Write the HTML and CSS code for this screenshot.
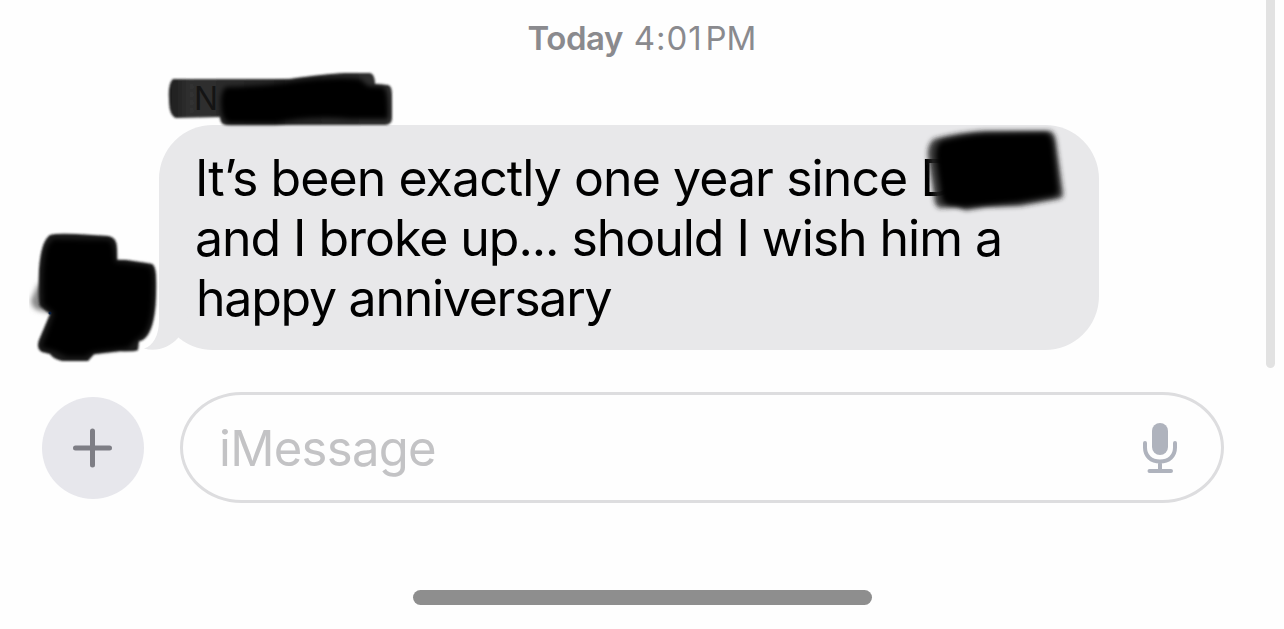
FILE: index.html
```html
<!DOCTYPE html>
<html lang="en">
<head>
  <meta charset="UTF-8">
  <meta name="viewport" content="width=device-width, initial-scale=1.0">
  <title>Messages</title>
  <link rel="stylesheet" href="styles.css">
</head>
<body>
  <div class="scrollbar"></div>

  <div class="timestamp"><span class="day">Today</span><span class="time">4:01</span><span class="pm">PM</span></div>

  <div class="sender">
    <svg class="marker sender-marker" viewBox="160 66 242 66">
      <defs>
        <filter id="soft" x="-10%" y="-10%" width="120%" height="120%"><feGaussianBlur stdDeviation="1.3"/></filter>
        <filter id="softer" x="-10%" y="-20%" width="120%" height="140%"><feGaussianBlur stdDeviation="2.4"/></filter>
        <linearGradient id="fade" x1="168" x2="390" y1="0" y2="0" gradientUnits="userSpaceOnUse">
          <stop offset="0" stop-color="#1c1c1c"/>
          <stop offset="0.1" stop-color="#303030"/>
          <stop offset="0.5" stop-color="#242424"/>
          <stop offset="1" stop-color="#303030"/>
        </linearGradient>
      </defs>
      <path filter="url(#soft)" fill="url(#fade)" d="M173 79 L290 79 Q325 74 345 73 L370 73 Q375 74 375 84 L388 85 Q392 86 392 94 L392 118 Q392 124 386 125 L226 125 Q220 124 220 117 L176 118 Q169 116 169 99 Q168 83 173 79Z"/>
      <path filter="url(#softer)" fill="#000" d="M226 87 Q270 86 290 82 Q335 76 360 79 L368 86 L383 87 Q389 90 388 119 L350 119 Q310 115 275 123 L228 123 Q221 119 221 105 Q220 92 226 87Z"/>
    </svg>
    <span class="sender-name">N</span>
  </div>

  <div class="message">
    <svg class="avatar" viewBox="24 225 136 142">
      <path filter="url(#softer)" fill="#888" d="M39 282 L31 300 Q31 307 37 310 L50 313Z"/>
      <path filter="url(#soft)" fill="#1c1c1c" d="M50 235 Q56 233 76 234 L108 236 Q117 237 117 249 L117 260 L126 260 L152 264 Q156 266 156 280 Q157 323 147 336 Q143 341 139 341 L138 350 Q136 352 120 351 L94 354 L88 361 L62 361 Q53 359 50 354 L42 352 Q36 349 39 340 L50 314 L40 306 Q38 302 39 270 Q41 241 50 235Z"/>
      <path filter="url(#softer)" fill="#000" d="M53 239 L109 240 Q114 243 115 262 L149 266 Q154 268 153 289 Q153 324 143 335 L135 341 L128 348 L93 352 L85 357 L67 357 L54 351 L41 347 L49 327 L54 313 L43 305 Q41 265 47 246Z"/>
      <circle cx="50" cy="313" r="1.5" fill="#041c40"/>
    </svg>
    <div class="bubble">
      <svg class="tail" viewBox="142 290 60 60">
        <path fill="#e8e8ea" d="M159 290 L159 320 C159 336 153 346 144 348.5 C156 352 169 348 178 338 L196 300 L190 290Z"/>
      </svg>
      <p class="line line-1">It’s been exactly one year since D</p>
      <p class="line line-2">and I broke up... should I wish him a</p>
      <p class="line line-3">happy anniversary</p>
      <svg class="marker name-marker" viewBox="918 122 154 96">
        <path filter="url(#softer)" fill="#222" fill-opacity="0.9" d="M934 139 Q960 132 985 131 L1050 131 Q1055 133 1056 142 L1063 193 Q1064 198 1058 199 L1020 206 L985 207 L966 210 L957 207 L940 208 Q934 206 934 196 L928 156 Q927 145 934 139Z"/>
        <path filter="url(#softer)" fill="#000" d="M942 141 Q965 135 985 134 L1046 133 Q1052 135 1053 146 L1058 190 Q1058 195 1053 196 L1018 202 L985 205 L964 207 L949 205 Q941 203 941 193 L936 158 Q935 145 942 141Z"/>
      </svg>
    </div>
  </div>

  <div class="composer">
    <button class="add" aria-label="Add">
      <svg width="40" height="40" viewBox="0 0 40 40">
        <path d="M19.500 3V37M2.500 20H36.500" stroke="#7e7e85" stroke-width="5" stroke-linecap="round"/>
      </svg>
    </button>
    <div class="field">
      <span class="placeholder">iMessage</span>
      <svg width="36" height="52" viewBox="0 0 36 52" fill="none">
        <rect x="10" y="1" width="16" height="32" rx="8" fill="#afb3bd"/>
        <path d="M3 21V25.500C3 34 9 39.500 18 39.500S33 34 33 25.500V21M18 40V48M7.500 49H29" stroke="#afb3bd" stroke-width="4" stroke-linecap="round"/>
      </svg>
    </div>
  </div>

  <div class="home-indicator"></div>
</body>
</html>
```

FILE: styles.css
```css
* {
  box-sizing: border-box;
}

body {
  margin: 0;
  height: 629px;
  background-color: #fefefe;
  font-family: Inter, "Liberation Sans", sans-serif;
  color: #000;
  display: flex;
  flex-direction: column;
  overflow: hidden;
  position: relative;
}

.scrollbar {
  position: absolute;
  top: 0;
  right: 9px;
  width: 9px;
  height: 368px;
  background-color: #e2e2e2;
  border-radius: 0 0 5px 5px;
}

.timestamp {
  display: flex;
  justify-content: center;
  height: 72px;
  padding-top: 18px;
  font-size: 33px;
  line-height: 40px;
  color: #8a8a8e;
}

.day {
  font-weight: 600;
  letter-spacing: -0.5px;
  margin-right: 11px;
}

.time {
  letter-spacing: 0.9px;
}

.pm {
  margin-left: 3px;
}

.sender {
  height: 53px;
  padding: 7px 0 0 194px;
  position: relative;
}

.sender-name {
  position: relative;
  z-index: 2;
  font-size: 32px;
  line-height: 40px;
  color: #141414;
}

.marker {
  position: absolute;
}

.sender-marker {
  left: 160px;
  top: -6px;
  width: 242px;
  height: 66px;
  z-index: 1;
}

.message {
  display: flex;
  height: 224px;
  padding-left: 24px;
}

.avatar {
  width: 136px;
  height: 142px;
  margin: 100px -1px 0 0;
  flex-shrink: 0;
}

.bubble {
  width: 940px;
  height: 225px;
  padding: 23px 0 0 36px;
  border-radius: 54px;
  background-color: #e8e8ea;
  position: relative;
}

.tail {
  position: absolute;
  left: -17px;
  top: 165px;
  width: 60px;
  height: 60px;
}

.line {
  margin: 0;
  font-size: 50px;
  line-height: 60px;
  white-space: nowrap;
}

.line-1 {
  letter-spacing: -0.92px;
}

.line-2 {
  letter-spacing: -1.05px;
}

.line-3 {
  letter-spacing: -1.25px;
  padding-left: 1px;
}

.name-marker {
  left: 759px;
  top: -3px;
  width: 154px;
  height: 96px;
}

.composer {
  display: flex;
  align-items: center;
  gap: 36px;
  height: 111px;
  margin-top: 43px;
  padding-left: 42px;
}

.add {
  width: 102px;
  height: 102px;
  padding: 0;
  border: none;
  border-radius: 50%;
  background-color: #e7e7ec;
  display: flex;
  justify-content: center;
  align-items: center;
}

.field {
  width: 1044px;
  height: 111px;
  padding: 0 43px 0 36px;
  border: 3px solid #dddddf;
  border-radius: 62px / 56px;
  display: flex;
  justify-content: space-between;
  align-items: center;
}

.placeholder {
  padding-top: 2px;
  font-size: 49px;
  line-height: 60px;
  color: #c3c3c5;
  letter-spacing: -0.7px;
}

.home-indicator {
  width: 459px;
  height: 15px;
  margin: 87px 0 0 413px;
  border-radius: 8px;
  background-color: #8e8e8e;
}
```
